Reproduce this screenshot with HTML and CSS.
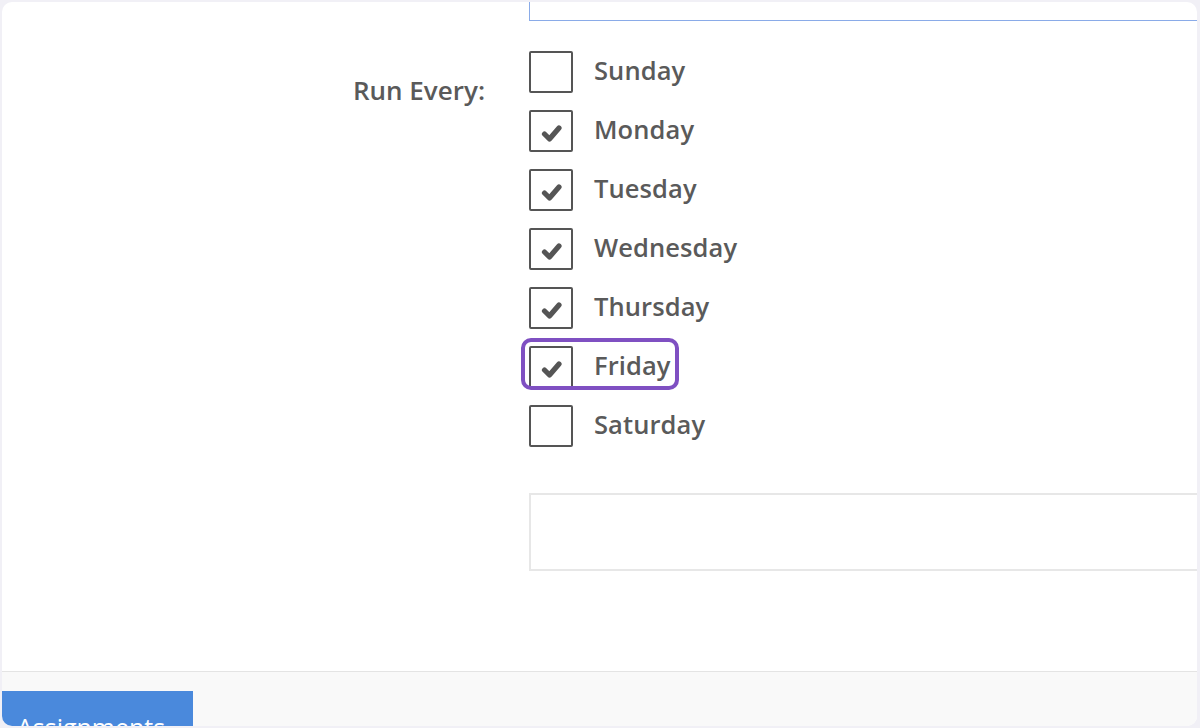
FILE: index.html
```html
<!DOCTYPE html>
<html>
<head>
<meta charset="utf-8">
<link rel="stylesheet" href="styles.css">
</head>
<body>
<div class="frame">
  <div class="card">
    <div class="form">
      <div class="top-input"></div>
      <div class="field">
        <div class="label">Run Every:</div>
        <div class="days">
          <div class="day"><span class="box"></span><span class="name">Sunday</span></div>
          <div class="day"><span class="box"><svg class="check" viewBox="0 0 22 20"><polyline points="3.5,11 8.5,16 18,5"/></svg></span><span class="name">Monday</span></div>
          <div class="day"><span class="box"><svg class="check" viewBox="0 0 22 20"><polyline points="3.5,11 8.5,16 18,5"/></svg></span><span class="name">Tuesday</span></div>
          <div class="day"><span class="box"><svg class="check" viewBox="0 0 22 20"><polyline points="3.5,11 8.5,16 18,5"/></svg></span><span class="name">Wednesday</span></div>
          <div class="day"><span class="box"><svg class="check" viewBox="0 0 22 20"><polyline points="3.5,11 8.5,16 18,5"/></svg></span><span class="name">Thursday</span></div>
          <div class="day highlighted"><span class="box"><svg class="check" viewBox="0 0 22 20"><polyline points="3.5,11 8.5,16 18,5"/></svg></span><span class="name">Friday</span><span class="ring"></span></div>
          <div class="day"><span class="box"></span><span class="name">Saturday</span></div>
        </div>
      </div>
      <div class="notes"></div>
    </div>
    <div class="footer">
      <button class="tab-btn">Assignments</button>
    </div>
  </div>
</div>
</body>
</html>
```

FILE: styles.css
```css
html, body {
  margin: 0;
  padding: 0;
  background: #f1f0f6;
}

.frame {
  padding: 2px 3px 2px 2px;
  height: 728px;
  box-sizing: border-box;
}

.card {
  background: #ffffff;
  border-radius: 10px;
  height: 724px;
  overflow: hidden;
  display: flex;
  flex-direction: column;
  font-family: "Open Sans", "Noto Sans", sans-serif;
  color: #5a5a5a;
}

.form {
  height: 669px;
  flex: none;
  overflow: hidden;
}

.top-input {
  margin-left: 527px;
  margin-top: -20px;
  height: 39px;
  width: 900px;
  border: 1px solid #8aabe8;
  box-sizing: border-box;
}

.field {
  display: flex;
  margin-top: 30px;
}

.label {
  width: 483px;
  text-align: right;
  font-size: 26px;
  font-weight: 600;
  line-height: 42px;
  padding-top: 18px;
  flex: none;
}

.days {
  margin-left: 44px;
  display: flex;
  flex-direction: column;
  gap: 17px;
}

.day {
  position: relative;
  display: flex;
  align-items: center;
  height: 42px;
}

.box {
  width: 44px;
  height: 42px;
  border: 2.5px solid #555555;
  box-sizing: border-box;
  border-radius: 2px;
  display: flex;
  align-items: center;
  justify-content: center;
  flex: none;
}

.check {
  width: 22px;
  height: 20px;
  margin-top: 4px;
  margin-left: 2px;
}

.check polyline {
  fill: none;
  stroke: #555555;
  stroke-width: 5.2;
  stroke-linecap: round;
  stroke-linejoin: round;
}

.name {
  margin-left: 21px;
  margin-bottom: 4px;
  font-size: 25.5px;
  font-weight: 600;
  line-height: 42px;
  letter-spacing: 0.1px;
}

.ring {
  position: absolute;
  left: -8px;
  top: -8px;
  width: 158px;
  height: 52px;
  border: 4px solid #7f50c2;
  border-radius: 10px;
  box-sizing: border-box;
}

.notes {
  margin-left: 527px;
  margin-top: 46px;
  width: 900px;
  height: 78px;
  border: 2px solid #e7e7e7;
  box-sizing: border-box;
}

.footer {
  flex: 1;
  background: #f9f9f9;
  border-top: 1px solid #e4e4e4;
  padding-top: 19px;
}

.tab-btn {
  display: block;
  width: 191px;
  height: 46px;
  background: #4a89dc;
  border: none;
  color: #ffffff;
  font-family: "Open Sans", "Noto Sans", sans-serif;
  font-size: 25px;
  text-align: left;
  padding: 19px 0 0 15px;
  line-height: 34px;
  vertical-align: top;
  overflow: hidden;
}
```
